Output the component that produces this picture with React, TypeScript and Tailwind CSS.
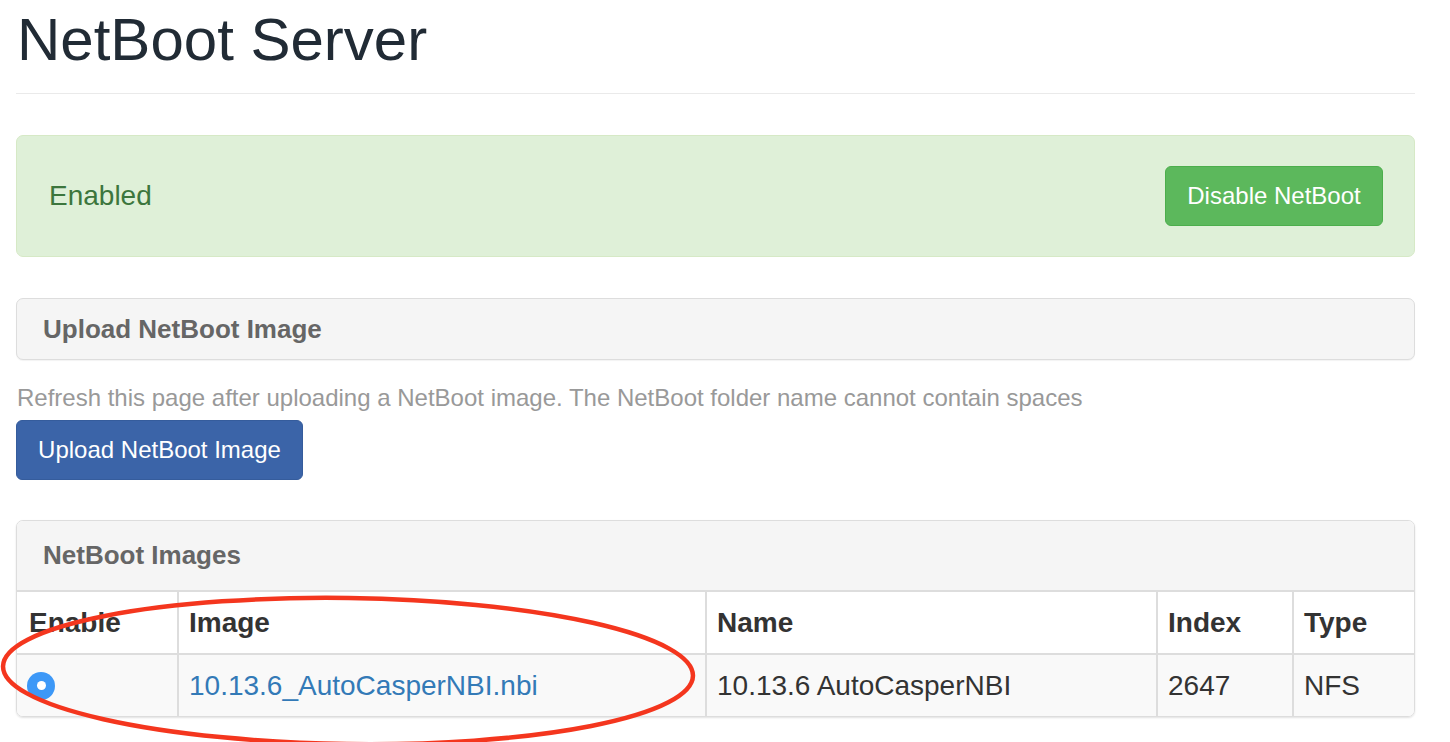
export default function App() {
  const font = { fontFamily: '"Liberation Sans", Arial, sans-serif' }

  return (
    <div className="relative h-[742px] w-[1450px] overflow-hidden bg-white" style={font}>
      <div className="w-[1399px] ml-[16px]">
        {/* Titulo */}
        <h1 className="pt-[7px] pl-[1px] text-[60px] leading-[66px] text-[#212b35]">NetBoot Server</h1>
        <div className="mt-[20px] border-t border-[#eaeaea]" />

        {/* Estado */}
        <div className="mt-[41px] h-[122px] flex items-center justify-between rounded-[7px] border border-[#d6e9c6] bg-[#dff0d8] pl-[32px] pr-[31px]">
          <span className="text-[28px] text-[#3c763d]">Enabled</span>
          <button className="h-[60px] w-[218px] rounded-[6px] border border-[#4cae4c] bg-[#5cb85c] text-[24px] text-white">
            Disable NetBoot
          </button>
        </div>

        {/* Subir imagen */}
        <div className="mt-[41px] h-[62px] flex items-center rounded-[7px] border border-[#dddddd] bg-[#f5f5f5] px-[26px] shadow-[0_1px_1px_rgba(0,0,0,0.05)]">
          <span className="text-[26px] font-bold text-[#666666]">Upload NetBoot Image</span>
        </div>
        <p className="mt-[21px] pl-[1px] text-[24px] leading-[34px] text-[#999999]">
          Refresh this page after uploading a NetBoot image. The NetBoot folder name cannot contain spaces
        </p>
        <button className="mt-[5px] h-[60px] w-[287px] rounded-[6px] border border-[#355c9c] bg-[#3b64a8] text-[24px] text-white">
          Upload NetBoot Image
        </button>

        {/* Lista de imagenes */}
        <div className="mt-[40px] overflow-hidden rounded-[7px] border border-[#dddddd] shadow-[0_1px_2px_rgba(0,0,0,0.12)]">
          <div className="h-[69px] flex items-center bg-[#f5f5f5] px-[26px]">
            <span className="text-[26px] font-bold text-[#666666]">NetBoot Images</span>
          </div>
          <table className="w-full border-collapse text-[28px]">
            <colgroup>
              <col className="w-[161px]" />
              <col className="w-[528px]" />
              <col className="w-[451px]" />
              <col className="w-[136px]" />
              <col />
            </colgroup>
            <thead>
              <tr className="h-[63px] bg-white text-left font-bold text-[#333333]">
                <th className="border-t-2 border-[#dddddd] px-[12px]">Enable</th>
                <th className="border-t-2 border-l-2 border-[#dddddd] px-[10px]">Image</th>
                <th className="border-t-2 border-l-2 border-[#dddddd] px-[10px]">Name</th>
                <th className="border-t-2 border-l-2 border-[#dddddd] px-[10px]">Index</th>
                <th className="border-t-2 border-l-2 border-[#dddddd] px-[10px]">Type</th>
              </tr>
            </thead>
            <tbody>
              <tr className="h-[62px] bg-[#f9f9f9] text-[#333333]">
                <td className="border-t-2 border-[#dddddd] px-[10px]">
                  <span className="flex h-[28px] w-[28px] items-center justify-center rounded-full bg-[#3d98f7]">
                    <span className="h-[9px] w-[9px] rounded-full bg-white" />
                  </span>
                </td>
                <td className="border-t-2 border-l-2 border-[#dddddd] px-[10px] text-[#337ab7]">10.13.6_AutoCasperNBI.nbi</td>
                <td className="border-t-2 border-l-2 border-[#dddddd] px-[10px]">10.13.6 AutoCasperNBI</td>
                <td className="border-t-2 border-l-2 border-[#dddddd] px-[10px]">2647</td>
                <td className="border-t-2 border-l-2 border-[#dddddd] px-[10px]">NFS</td>
              </tr>
            </tbody>
          </table>
        </div>
      </div>

      {/* Marca roja */}
      <svg className="pointer-events-none absolute left-0 top-0" width="1450" height="742">
        <ellipse cx="348" cy="671" rx="345" ry="73" fill="none" stroke="#f4361e" strokeWidth="4.5" transform="rotate(0.8 348 671)" />
      </svg>
    </div>
  )
}
